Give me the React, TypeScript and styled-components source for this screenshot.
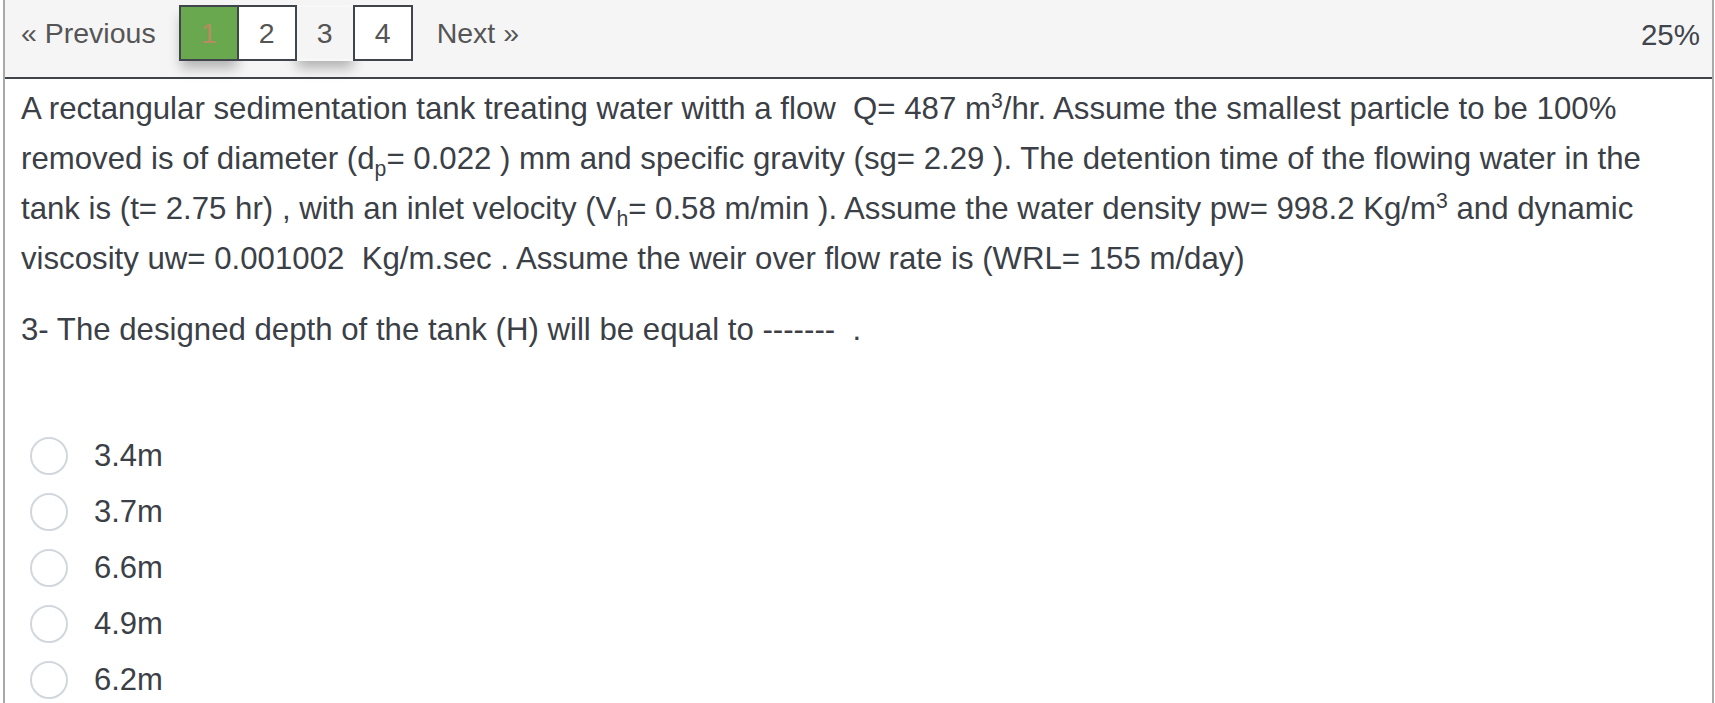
import React from "react";
import styled, { createGlobalStyle } from "styled-components";

const Global = createGlobalStyle`
  html, body { margin: 0; padding: 0; background: #fff; }
  body { font-family: "Liberation Sans", Arial, sans-serif; overflow: hidden; }
`;

const Frame = styled.div`
  box-sizing: border-box;
  margin-left: 3px;
  width: 1711px;
  height: 703px;
  border-left: 2px solid #a9a9a9;
  border-right: 2px solid #a9a9a9;
  display: flex;
  flex-direction: column;
`;

const Header = styled.div`
  box-sizing: border-box;
  flex: none;
  height: 79px;
  background: #f5f5f5;
  border-bottom: 2px solid #3f454b;
  display: flex;
  align-items: flex-start;
  padding: 5px 12px 0 16px;
`;

const NavLink = styled.span<{ $side: "prev" | "next" }>`
  font-size: 28.5px;
  color: #555;
  height: 56px;
  line-height: 56px;
  margin: ${(p) => (p.$side === "prev" ? "0 23px 0 0" : "0 0 0 24px")};
`;

const Pages = styled.div`
  display: flex;
`;

const PageBox = styled.div<{ $variant: "active" | "plain" | "hover" }>`
  box-sizing: border-box;
  width: 60px;
  height: 56px;
  display: flex;
  align-items: center;
  justify-content: center;
  font-size: 28.5px;
  margin-left: -2px;
  &:first-child { margin-left: 0; }
  border: 2px solid
    ${(p) => (p.$variant === "hover" ? "#f8f8f8" : "#3f454b")};
  background: ${(p) =>
    p.$variant === "active" ? "#6aa84f" : p.$variant === "hover" ? "#f5f5f5" : "#fff"};
  color: ${(p) => (p.$variant === "active" ? "#b88b5e" : "#555")};
  box-shadow: ${(p) =>
    p.$variant === "plain" ? "none" : "0 9px 12px -2px rgba(0,0,0,0.28)"};
  position: relative;
  z-index: ${(p) => (p.$variant === "plain" ? 1 : 0)};
`;

const Spacer = styled.div`
  flex: 1;
`;

const Progress = styled.span`
  font-size: 29.5px;
  color: #3f454b;
  height: 60px;
  line-height: 60px;
`;

const Body = styled.div`
  padding: 5px 16px 0 16px;
  color: #3b4046;
  line-height: 50px;
  font-size: 31.2px;
`;

const Para = styled.p`
  margin: 0 0 21px 0;
  white-space: nowrap;
  sup, sub { font-size: 0.68em; line-height: 0; }
`;

const Options = styled.div`
  margin-top: 73px;
  display: flex;
  flex-direction: column;
`;

const Option = styled.label`
  display: flex;
  align-items: center;
  height: 56px;
  padding-left: 9px;
  font-size: 31px;
  color: #3b4046;
`;

const Radio = styled.span`
  box-sizing: border-box;
  width: 38px;
  height: 38px;
  border-radius: 50%;
  border: 2px solid #d2d7dc;
  background: #fff;
  margin-right: 26px;
  flex: none;
`;

const options = ["3.4m", "3.7m", "6.6m", "4.9m", "6.2m"];

export default function App() {
  return (
    <>
      <Global />
      <Frame>
        <Header>
          <NavLink $side="prev">« Previous</NavLink>
          <Pages>
            <PageBox $variant="active">1</PageBox>
            <PageBox $variant="plain">2</PageBox>
            <PageBox $variant="hover">3</PageBox>
            <PageBox $variant="plain">4</PageBox>
          </Pages>
          <NavLink $side="next">Next »</NavLink>
          <Spacer />
          <Progress>25%</Progress>
        </Header>
        <Body>
          <Para>
            A rectangular sedimentation tank treating water witth a flow&nbsp; Q= 487 m<sup>3</sup>/hr. Assume the
            smallest particle to be 100%
            <br />
            removed is of diameter (d<sub>p</sub>= 0.022 ) mm and specific gravity (sg= 2.29 ). The detention time of
            the flowing water in the
            <br />
            tank is (t= 2.75 hr) , with an inlet velocity (V<sub>h</sub>= 0.58 m/min ). Assume the water density pw=
            998.2 Kg/m<sup>3</sup> and dynamic
            <br />
            viscosity uw= 0.001002&nbsp; Kg/m.sec . Assume the weir over flow rate is (WRL= 155 m/day)
          </Para>
          <Para>3- The designed depth of the tank (H) will be equal to -------&nbsp; .</Para>
          <Options>
            {options.map((o) => (
              <Option key={o}>
                <Radio />
                {o}
              </Option>
            ))}
          </Options>
        </Body>
      </Frame>
    </>
  );
}
